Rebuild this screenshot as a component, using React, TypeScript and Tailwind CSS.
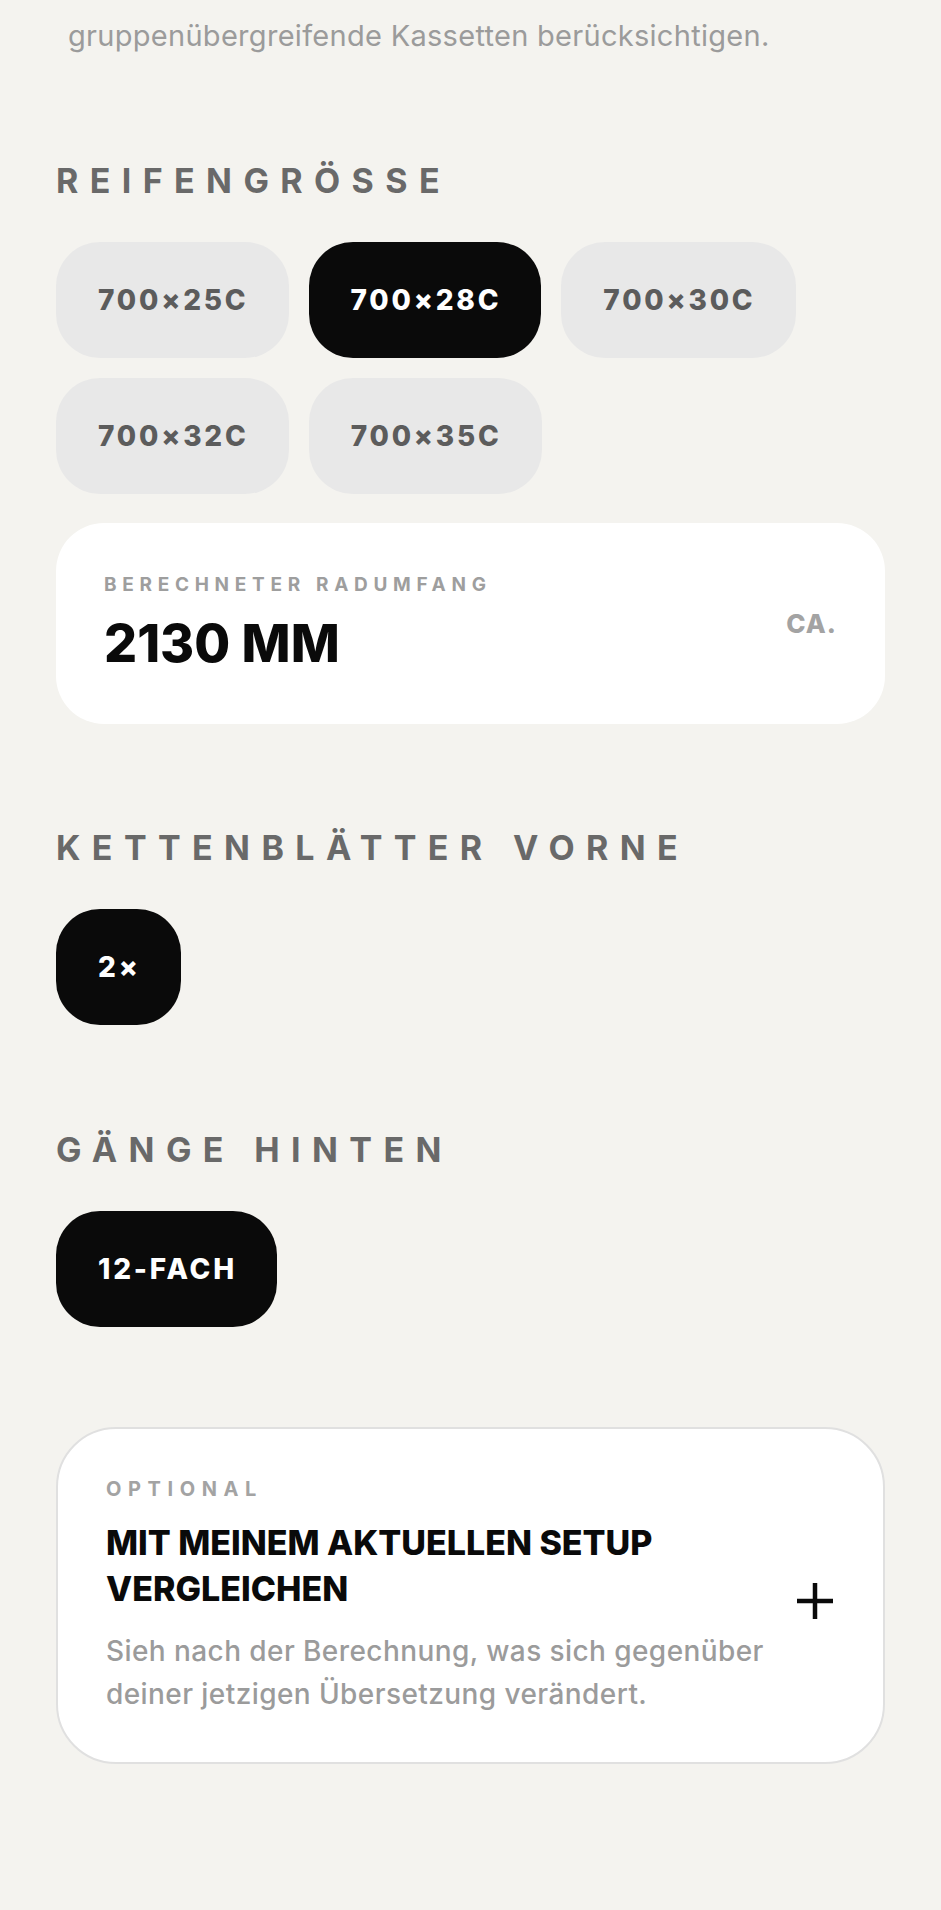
import React from "react";

function Heading({ children, className = "" }: { children: React.ReactNode; className?: string }) {
  return (
    <h2 className={`text-[34px] font-bold leading-[40px] tracking-[0.335em] text-[#696969] ${className}`}>
      {children}
    </h2>
  );
}

function Chip({ label, active = false }: { label: string; active?: boolean }) {
  return (
    <button
      className={`flex h-[116px] items-center justify-center rounded-[44px] pl-[42px] pr-[40px] text-[28px] font-extrabold leading-none tracking-[0.1em] ${
        active ? "bg-[#0a0a0a] text-white" : "bg-[#e8e8e8] text-[#5c5c5c]"
      }`}
    >
      {label}
    </button>
  );
}

export default function App() {
  const tires = ["700×25C", "700×28C", "700×30C", "700×32C", "700×35C"];
  return (
    <div className="min-h-screen bg-[#f4f3ef] px-14 pb-[147px] font-['Inter',sans-serif]">
      <p className="pl-3 pt-4 text-[29px] leading-[40px] tracking-[0.01em] text-[#9b9b9b]">
        gruppenübergreifende Kassetten berücksichtigen.
      </p>

      <Heading className="mt-[105px]">REIFENGRÖSSE</Heading>
      <div className="mt-[41px] flex flex-wrap gap-5">
        {tires.map((t) => (
          <Chip key={t} label={t} active={t === "700×28C"} />
        ))}
      </div>

      <div className="mt-[29px] flex h-[201px] justify-between rounded-[48px] bg-white px-12">
        <div className="pt-[50px]">
          <div className="text-[19px] font-bold leading-[24px] tracking-[0.3em] text-[#9e9e9e]">
            BERECHNETER RADUMFANG
          </div>
          <div className="mt-[19px] text-[52px] font-extrabold leading-[56px] text-[#0a0a0a]">2130 MM</div>
        </div>
        <div className="self-center text-[26px] font-extrabold tracking-[0.04em] text-[#a3a3a3]">CA.</div>
      </div>

      <Heading className="mt-[104px]">KETTENBLÄTTER VORNE</Heading>
      <div className="mt-[41px] flex">
        <Chip label="2×" active />
      </div>

      <Heading className="mt-[105px]">GÄNGE HINTEN</Heading>
      <div className="mt-[41px] flex">
        <Chip label="12-FACH" active />
      </div>

      <div className="mt-[100px] flex items-center gap-6 rounded-[60px] border-2 border-[#e0e0e0] bg-white pb-[46px] pl-12 pr-[50px] pt-12">
        <div className="flex-1">
          <div className="text-[20px] font-bold leading-[24px] tracking-[0.33em] text-[#a3a3a3]">OPTIONAL</div>
          <div className="mt-[19px] text-[34px] font-extrabold leading-[46px] text-[#0a0a0a]">
            MIT MEINEM AKTUELLEN SETUP VERGLEICHEN
          </div>
          <p className="mt-[18px] text-[28px] font-medium leading-[43px] tracking-[0.015em] text-[#9b9b9b]">
            Sieh nach der Berechnung, was sich gegenüber deiner jetzigen Übersetzung verändert.
          </p>
        </div>
        <svg width="36" height="36" viewBox="0 0 36 36" className="mt-2 shrink-0">
          <line x1="18" y1="0" x2="18" y2="36" stroke="#0a0a0a" strokeWidth="4.5" />
          <line x1="0" y1="18" x2="36" y2="18" stroke="#0a0a0a" strokeWidth="4.5" />
        </svg>
      </div>
    </div>
  );
}
